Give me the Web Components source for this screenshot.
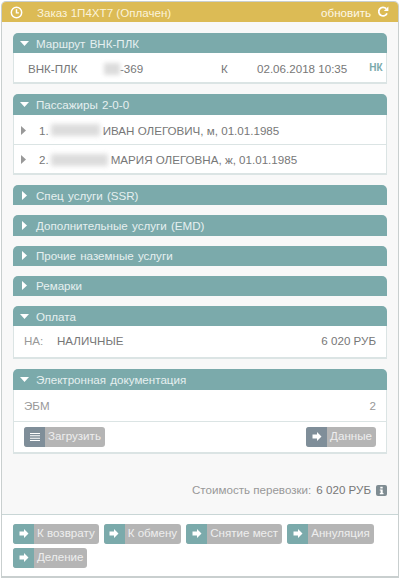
<!DOCTYPE html>
<html>
<head>
<meta charset="utf-8">
<style>
  html, body { margin: 0; padding: 0; background: #fff; }
  body { width: 400px; height: 580px; font: 11.6px "Liberation Sans", Arial, sans-serif; color: #666; }
</style>
</head>
<body>
<order-card>
  <span slot="title">Заказ 1П4ХТ7 (Оплачен)</span>

  <order-panel heading="Маршрут ВНК-ПЛК" open>
    <route-row></route-row>
  </order-panel>

  <order-panel heading="Пассажиры 2-0-0" open>
    <passenger-row num="1." name="ИВАН ОЛЕГОВИЧ, м, 01.01.1985" blur="49"></passenger-row>
    <passenger-row num="2." name="МАРИЯ ОЛЕГОВНА, ж, 01.01.1985" blur="57" last></passenger-row>
  </order-panel>

  <order-panel heading="Спец услуги (SSR)"></order-panel>
  <order-panel heading="Дополнительные услуги (EMD)"></order-panel>
  <order-panel heading="Прочие наземные услуги"></order-panel>
  <order-panel heading="Ремарки"></order-panel>

  <order-panel heading="Оплата" open>
    <pay-row></pay-row>
  </order-panel>

  <order-panel heading="Электронная документация" open>
    <docs-row></docs-row>
  </order-panel>

  <order-total slot="total"></order-total>

  <action-btn slot="actions">К возврату</action-btn>
  <action-btn slot="actions">К обмену</action-btn>
  <action-btn slot="actions">Снятие мест</action-btn>
  <action-btn slot="actions">Аннуляция</action-btn>
  <action-btn slot="actions">Деление</action-btn>
</order-card>

<script>
const arrowIcon = `<svg width="10" height="9" viewBox="0 0 10 9"><path d="M0.5 2.5h4.5V0L9.5 4.5 5 9V6.5H0.5z" fill="#fff"/></svg>`;
const menuIcon = `<svg width="10" height="8" viewBox="0 0 10 8"><path d="M0 0h10v1H0zM0 2.33h10v1H0zM0 4.66h10v1H0zM0 7h10v1H0z" fill="#fff"/></svg>`;

class OrderCard extends HTMLElement {
  constructor() {
    super();
    this.attachShadow({ mode: 'open' });
    this.shadowRoot.innerHTML = `
      <style>
        :host { display: block; width: 400px; height: 580px; box-sizing: border-box; padding: 1px 1px 2px 1px; }
        .frame {
          height: 100%; box-sizing: border-box; background: #f8f8f8;
          border: 1px solid #c9cfcf; border-bottom-width: 2px; border-radius: 5px 5px 0 0;
          display: flex; flex-direction: column; overflow: hidden;
        }
        header {
          height: 20px; flex: none; background: #dcbb55;
          display: flex; align-items: center; padding: 0 9px 0 8px;
        }
        header .clock { width: 13px; height: 13px; margin-right: 14px; }
        header .title { flex: 1; color: #fbf3da; }
        header .refresh { display: flex; align-items: center; gap: 6px; color: #fdf8e8; }
        main { flex: none; padding: 11px 11px 0 11px; display: flex; flex-direction: column; gap: 10px; }
        .total { flex: none; height: 60px; padding: 0 11px; }
        .actions {
          flex: 1; box-sizing: border-box; background: #fff;
          border-top: 1px solid #c9d6d6; padding: 9px 11px 0 11px;
          display: flex; flex-wrap: wrap; align-content: flex-start; gap: 4px 5px;
        }
      </style>
      <div class="frame">
        <header>
          <svg class="clock" viewBox="0 0 14 14" fill="none" stroke="#fff" stroke-width="1.6">
            <circle cx="7" cy="7" r="5.6"/><path d="M7 3.6V7.4h2.6"/>
          </svg>
          <span class="title"><slot name="title"></slot></span>
          <span class="refresh">обновить
            <svg width="12" height="12" viewBox="0 0 12 12" fill="none">
              <path d="M10 7.4A4.3 4.3 0 1 1 9.2 2.7" stroke="#fff" stroke-width="1.8"/>
              <path d="M11.4 0.4V5H6.8z" fill="#fff"/>
            </svg>
          </span>
        </header>
        <main><slot></slot></main>
        <div class="total"><slot name="total"></slot></div>
        <div class="actions"><slot name="actions"></slot></div>
      </div>`;
  }
}

class OrderPanel extends HTMLElement {
  constructor() {
    super();
    this.attachShadow({ mode: 'open' });
  }
  connectedCallback() {
    const open = this.hasAttribute('open');
    const caret = open
      ? `<svg width="9" height="5" viewBox="0 0 9 5"><path d="M0 0h9L4.5 5z" fill="#fff"/></svg>`
      : `<svg width="5" height="9" viewBox="0 0 5 9"><path d="M0 0v9L5 4.5z" fill="#fff"/></svg>`;
    this.shadowRoot.innerHTML = `
      <style>
        :host { display: block; }
        .head {
          height: 20.25px; background: #7baaab; color: #e6f0f0; border-radius: 5px 5px 0 0;
          display: flex; align-items: center;
        }
        .caret { width: 23px; flex: none; display: flex; justify-content: center; box-sizing: border-box; padding-right: 1px; }
        .body { background: #fff; border: 1px solid #dbe4e4; border-top: 0; border-bottom-width: 2px; }
        :host(:not([open])) .body { display: none; }
        .title { word-spacing: 1px; }
      </style>
      <div class="head"><span class="caret">${caret}</span><span class="title">${this.getAttribute('heading')}</span></div>
      <div class="body"><slot></slot></div>`;
  }
}

class RouteRow extends HTMLElement {
  constructor() {
    super();
    this.attachShadow({ mode: 'open' });
    this.shadowRoot.innerHTML = `
      <style>
        :host { display: block; height: 29px; }
        .row { height: 100%; box-sizing: border-box; display: flex; align-items: center; padding: 2px 0 0 14px; color: #777; }
        .a { width: 76px; }
        .smudge { width: 16px; height: 12px; background: #dcdcdc; filter: blur(2px); }
        .fl { width: 101px; }
        .cl { width: 36px; }
        .hk { margin-left: 22px; font-size: 10px; font-weight: bold; color: #7baaab; position: relative; top: -1px; }
      </style>
      <div class="row">
        <span class="a">ВНК-ПЛК</span><span class="smudge"></span><span class="fl">-369</span><span class="cl">К</span><span>02.06.2018 10:35</span><span class="hk">НК</span>
      </div>`;
  }
}

class PassengerRow extends HTMLElement {
  constructor() {
    super();
    this.attachShadow({ mode: 'open' });
  }
  connectedCallback() {
    const w = this.getAttribute('blur');
    this.shadowRoot.innerHTML = `
      <style>
        :host { display: block; height: 30px; box-sizing: border-box; border-bottom: 1px solid #dbe4e4; }
        :host([last]) { border-bottom: 0; height: 28.5px; }
        .row { height: 100%; box-sizing: border-box; display: flex; align-items: center; color: #777; padding: 2px 0 0 7px; }
        .tri { margin-right: 13px; }
        .num { margin-right: 2px; }
        .smudge { width: ${w}px; height: 12px; background: #dcdcdc; filter: blur(2.5px); margin-right: 3px; }
      </style>
      <div class="row">
        <svg class="tri" width="5" height="9" viewBox="0 0 5 9"><path d="M0 0v9L5 4.5z" fill="#999"/></svg>
        <span class="num">${this.getAttribute('num')}</span>
        <span class="smudge"></span>
        <span>${this.getAttribute('name')}</span>
      </div>`;
  }
}

class PayRow extends HTMLElement {
  constructor() {
    super();
    this.attachShadow({ mode: 'open' });
    this.shadowRoot.innerHTML = `
      <style>
        :host { display: block; height: 31px; }
        .row { height: 100%; display: flex; align-items: center; padding: 0 10px 3px 10px; color: #777; box-sizing: border-box; }
        .l { width: 33px; color: #999; }
        .m { flex: 1; }
      </style>
      <div class="row"><span class="l">НА:</span><span class="m">НАЛИЧНЫЕ</span><span>6 020 РУБ</span></div>`;
  }
}

class DocsRow extends HTMLElement {
  constructor() {
    super();
    this.attachShadow({ mode: 'open' });
    this.shadowRoot.innerHTML = `
      <style>
        :host { display: block; }
        .top { height: 32px; box-sizing: border-box; display: flex; justify-content: space-between; align-items: center; padding: 0 10px; color: #999; border-bottom: 1px solid #dbe4e4; }
        .bot { height: 30px; box-sizing: border-box; display: flex; justify-content: space-between; padding: 5px 10px 0 10px; }
      </style>
      <div class="top"><span>ЭБМ</span><span>2</span></div>
      <div class="bot">
        <action-btn dark icon="menu">Загрузить</action-btn>
        <action-btn dark>Данные</action-btn>
      </div>`;
  }
}

class OrderTotal extends HTMLElement {
  constructor() {
    super();
    this.attachShadow({ mode: 'open' });
    this.shadowRoot.innerHTML = `
      <style>
        :host { display: flex; justify-content: flex-end; align-items: center; height: 100%; color: #999; padding-top: 12px; box-sizing: border-box; }
        b { font-weight: normal; color: #777; margin: 0 5px 0 5px; }
        svg { display: block; margin-top: 2px; }
      </style>
      <span>Стоимость перевозки:</span><b>6 020 РУБ</b>
      <svg width="11" height="11" viewBox="0 0 11 11">
        <rect width="11" height="11" rx="2" fill="#7f8c92"/>
        <path d="M4.3 1.8h2.4v1.8H4.3zM3.8 4.4h2.9v3.6h.8v1.2h-3.7V8h.8V5.6h-.8z" fill="#fff"/>
      </svg>`;
  }
}

class ActionBtn extends HTMLElement {
  constructor() {
    super();
    this.attachShadow({ mode: 'open' });
  }
  connectedCallback() {
    const icon = this.getAttribute('icon') === 'menu' ? menuIcon : arrowIcon;
    this.shadowRoot.innerHTML = `
      <style>
        :host { display: inline-flex; height: 20px; border-radius: 3px; overflow: hidden; background: #b5b5b5; color: #eee; }
        .ic { width: 21px; display: flex; align-items: center; justify-content: center; background: #7baaab; }
        :host([dark]) .ic { background: #7f8e99; }
        .tx { padding: 0 4px 3px 3px; display: flex; align-items: center; }
      </style>
      <span class="ic">${icon}</span><span class="tx"><slot></slot></span>`;
  }
}

customElements.define('order-card', OrderCard);
customElements.define('order-panel', OrderPanel);
customElements.define('route-row', RouteRow);
customElements.define('passenger-row', PassengerRow);
customElements.define('pay-row', PayRow);
customElements.define('docs-row', DocsRow);
customElements.define('order-total', OrderTotal);
customElements.define('action-btn', ActionBtn);
</script>
</body>
</html>
